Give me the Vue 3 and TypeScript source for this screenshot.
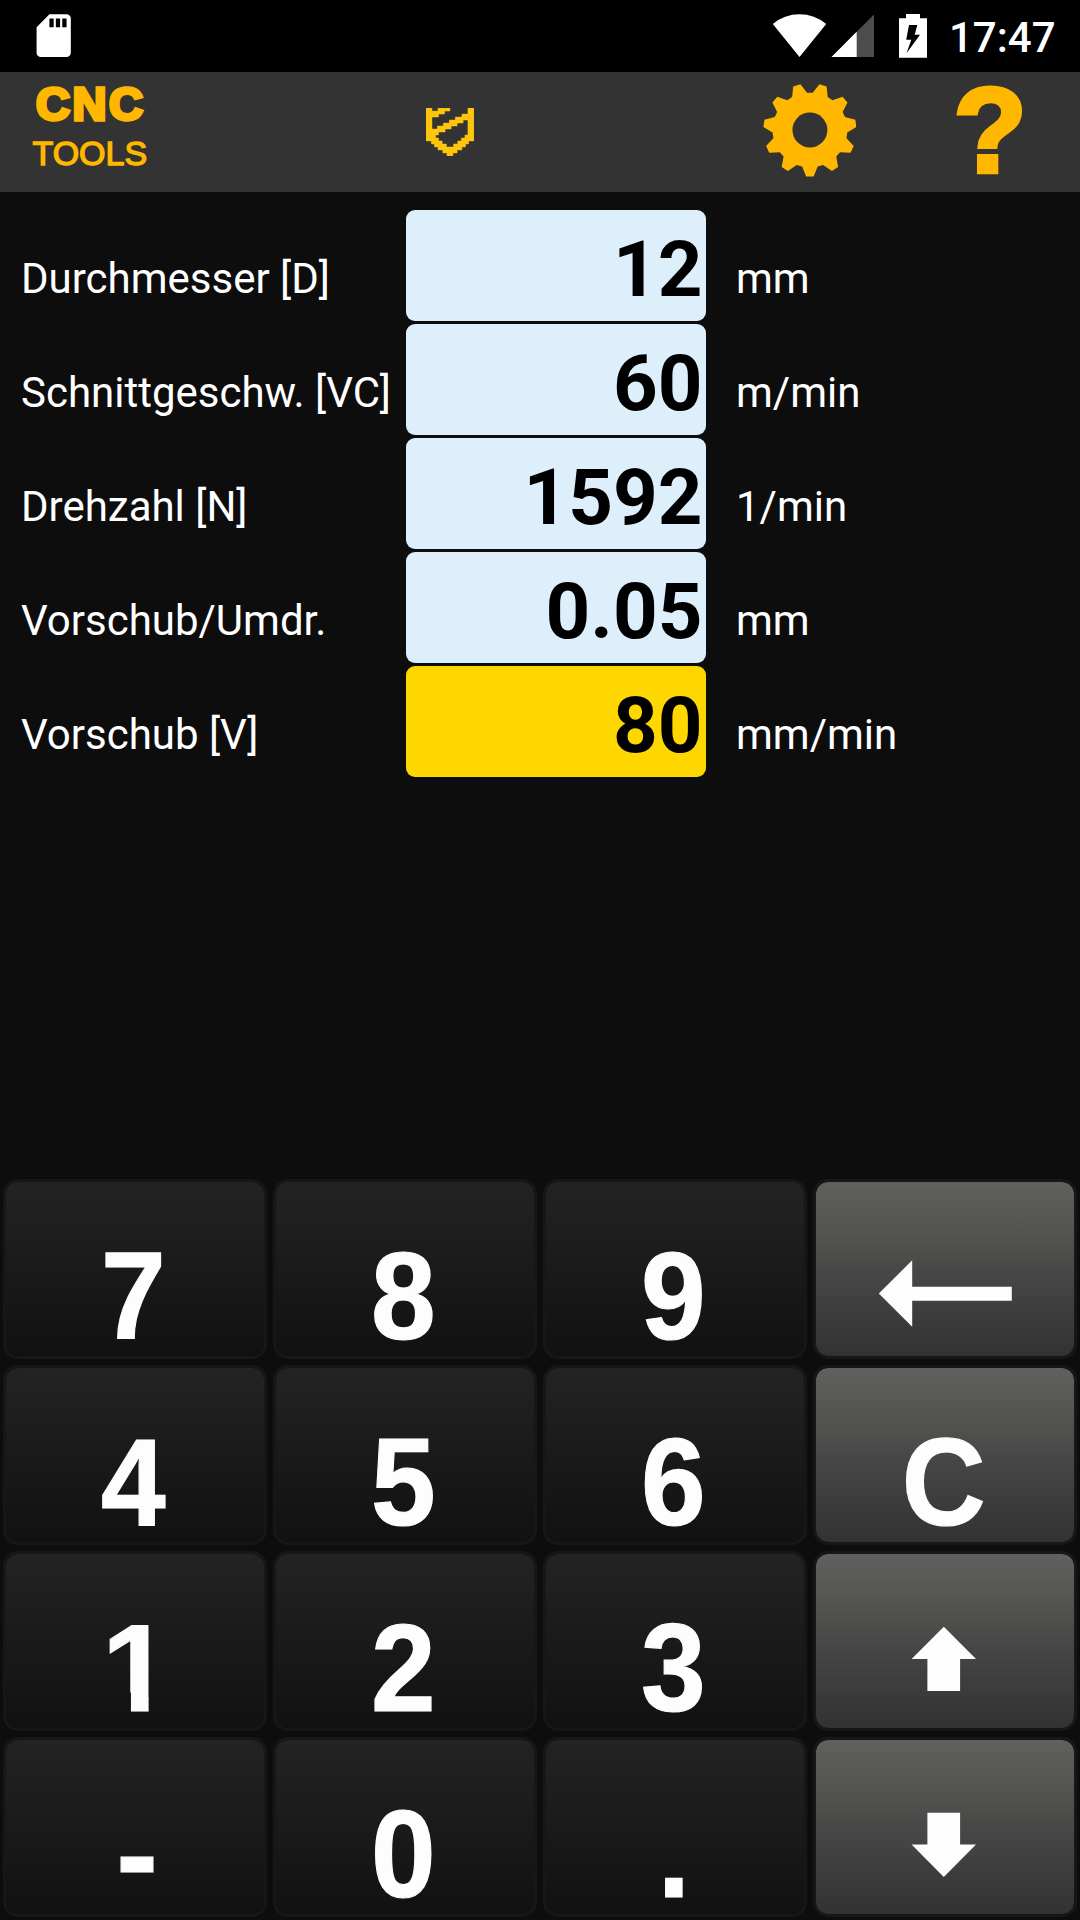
<script setup lang="ts">
interface Field {
  label: string
  value: string
  unit: string
  active?: boolean
}

interface Key {
  id: string
  text?: string
  arrow?: string
  grey?: boolean
}

const fields: Field[] = [
  { label: 'Durchmesser [D]', value: '12', unit: 'mm' },
  { label: 'Schnittgeschw. [VC]', value: '60', unit: 'm/min' },
  { label: 'Drehzahl [N]', value: '1592', unit: '1/min' },
  { label: 'Vorschub/Umdr.', value: '0.05', unit: 'mm' },
  { label: 'Vorschub [V]', value: '80', unit: 'mm/min', active: true },
]

const keys: Key[] = [
  { id: 'seven', text: '7' },
  { id: 'eight', text: '8' },
  { id: 'nine', text: '9' },
  { id: 'back', grey: true, arrow: '65.8,114.5 99.2,81.3 99.2,107.7 198.8,107.7 198.8,121.7 99.2,121.7 99.2,147.7' },
  { id: 'four', text: '4' },
  { id: 'five', text: '5' },
  { id: 'six', text: '6' },
  { id: 'clear', text: 'C', grey: true },
  { id: 'one', text: '1' },
  { id: 'two', text: '2' },
  { id: 'three', text: '3' },
  { id: 'up', grey: true, arrow: '130.8,75.7 163,108 147.1,108 147.1,140 114.4,140 114.4,108 98.6,108' },
  { id: 'minus', text: '-' },
  { id: 'zero', text: '0' },
  { id: 'dot', text: '.' },
  { id: 'down', grey: true, arrow: '114.4,75.8 147.1,75.8 147.1,107.5 163,107.5 130.8,140 98.6,107.5 114.4,107.5' },
]

const TEETH = 11

// Gear outline: every tooth contributes two root points and two tip points.
function gearPoints(): string {
  const points: string[] = []
  const add = (deg: number, r: number) => {
    const a = (deg * Math.PI) / 180
    points.push(`${(Math.sin(a) * r).toFixed(2)},${(Math.cos(a) * r).toFixed(2)}`)
  }
  for (let i = 0; i < TEETH; i++) {
    const c = (i * 360) / TEETH
    add(c - 12, 37.5)
    add(c - 4.6, 46.7)
    add(c + 4.6, 46.7)
    add(c + 12, 37.5)
  }
  return points.join(' ')
}

const gear = gearPoints()

// Shield bitmap on a 16 x 16 grid: [row, left, right].
const shield: number[][] = [
  [0, 0, 2], [0, 4, 8], [0, 14, 16],
  [1, 0, 6.2], [1, 14, 16],
  [2, 0, 4.2], [2, 12, 16],
  [3, 0, 2], [3, 9.8, 16],
  [4, 0, 2], [4, 7.8, 12.4], [4, 14, 16],
  [5, 0, 2], [5, 5.8, 10.4], [5, 14, 16],
  [6, 0, 2], [6, 3.8, 8.4], [6, 14, 16],
  [7, 0, 6.4], [7, 14, 16],
  [8, 0, 4.2], [8, 14, 16],
  [9, 0, 3.2], [9, 13, 16],
  [10, 0, 4.2], [10, 11.8, 16],
  [11, 1.8, 5.4], [11, 10.6, 14.2],
  [12, 2.8, 6.8], [12, 9.2, 13.2],
  [13, 4, 12],
  [14, 5.6, 10.4],
  [15, 7, 9],
]
</script>

<template>
  <div class="screen">
    <div class="status">
      <svg class="sd" viewBox="0 0 24 24">
        <path
          fill="#fff"
          d="M18 2h-8L4.02 8 4 20c0 1.1.9 2 2 2h12c1.1 0 2-.9 2-2V4c0-1.1-.9-2-2-2zm-6 6h-2V4h2v4zm3 0h-2V4h2v4zm3 0h-2V4h2v4z"
        />
      </svg>
      <svg class="indicators" viewBox="770 0 160 72">
        <path fill="#fff" d="M799.5 57 772.8 24Q784.5 14.3 799.5 14.3T826.2 24Z" />
        <path fill="#4d4d4d" d="M874 14.5V57H831.5Z" />
        <path fill="#fff" d="M856.7 31.7V57H831.5Z" />
        <path fill="#fff" d="M906 18.3V14H920V18.3H927V57.8H899V18.3Z" />
        <path fill="#000" d="M909 25H917.3L914.7 34.8H920L906.5 53.3L911.3 39.8H906.2Z" />
      </svg>
      <span class="clock">17:47</span>
    </div>

    <header class="bar">
      <div class="logo">
        <span class="cnc">CNC</span>
        <span class="tools">TOOLS</span>
      </div>
      <svg class="shield" viewBox="0 0 16 16">
        <rect
          v-for="(run, i) in shield"
          :key="i"
          :x="run[1]"
          :y="run[0]"
          :width="run[2] - run[1]"
          height="1"
          fill="#ffc60d"
          stroke="#ffc60d"
          stroke-width="0.15"
          stroke-linejoin="round"
        />
      </svg>
      <svg class="gear" viewBox="-47 -47 94 94">
        <polygon :points="gear" fill="#ffb700" />
        <circle r="17.5" fill="#333" />
      </svg>
      <span class="help">?</span>
    </header>

    <main class="fields">
      <div v-for="f in fields" :key="f.label" class="row">
        <span class="label">{{ f.label }}</span>
        <div class="value" :class="{ active: f.active }">{{ f.value }}</div>
        <span class="unit">{{ f.unit }}</span>
      </div>
    </main>

    <div class="keypad">
      <div v-for="k in keys" :key="k.id" class="key" :class="{ grey: k.grey, arrowed: k.arrow }">
        <svg v-if="k.arrow" viewBox="3 3 258 174">
          <polygon :points="k.arrow" fill="#fdfdfd" />
        </svg>
        <span v-else class="glyph" :class="k.id">{{ k.text }}</span>
      </div>
    </div>
  </div>
</template>

<style>
body {
  background: #0d0d0d;
}
</style>

<style scoped>
.screen {
  width: 1080px;
  height: 1920px;
  display: flex;
  flex-direction: column;
  background: #0d0d0d;
  overflow: hidden;
  font-family: Roboto, "Liberation Sans", sans-serif;
}

.status {
  flex: none;
  height: 72px;
  display: flex;
  background: #000;
}

.sd {
  width: 51.4px;
  height: 51.4px;
  margin: 10.3px 0 0 28.3px;
}

.indicators {
  width: 160px;
  height: 72px;
  margin-left: 690.3px;
}

.clock {
  margin-left: 19px;
  color: #fff;
  font-size: 42px;
  font-weight: 500;
  line-height: 75px;
}

.bar {
  flex: none;
  height: 120px;
  display: flex;
  background: #333;
}

.logo {
  width: 180px;
  display: flex;
  flex-direction: column;
  align-items: center;
  font-family: "Liberation Sans", Arial, sans-serif;
  color: #ffb700;
}

.cnc {
  margin-top: 6px;
  padding-left: 2px;
  font-size: 47px;
  font-weight: 700;
  line-height: 52px;
  letter-spacing: 2.6px;
  -webkit-text-stroke: 3.6px #ffb700;
}

.tools {
  font-size: 34px;
  line-height: 47px;
  -webkit-text-stroke: 1.4px #ffb700;
}

.shield {
  width: 48px;
  height: 48px;
  margin: 36px 0 0 246px;
}

.gear {
  width: 94px;
  height: 94px;
  margin: 11px 0 0 289px;
}

.help {
  width: 180px;
  margin-left: 44px;
  text-align: center;
  font-family: "Liberation Sans", Arial, sans-serif;
  font-size: 120px;
  font-weight: 700;
  line-height: 116px;
  color: #ffb700;
  -webkit-text-stroke: 4.4px #ffb700;
}

.fields {
  flex: 1;
  padding-top: 18px;
  display: flex;
  flex-direction: column;
  gap: 3px;
}

.row {
  height: 111px;
  display: flex;
}

.label {
  width: 385px;
  padding-left: 21px;
  color: #fff;
  font-size: 42px;
  line-height: 137px;
  white-space: nowrap;
}

.value {
  width: 300px;
  box-sizing: border-box;
  padding-right: 3.5px;
  border-radius: 9px;
  background: #dceffb;
  color: #000;
  font-size: 78px;
  font-weight: 700;
  line-height: 119px;
  text-align: right;
}

.value.active {
  background: #ffd700;
}

.unit {
  padding-left: 30px;
  color: #fff;
  font-size: 42px;
  line-height: 137px;
}

.keypad {
  flex: none;
  padding: 3px;
  display: grid;
  grid-template-columns: repeat(4, 264px);
  grid-auto-rows: 180px;
  gap: 6px;
}

.key {
  box-sizing: border-box;
  display: flex;
  align-items: center;
  justify-content: center;
  padding-top: 53px;
  border: 3px solid #171717;
  border-radius: 15px;
  background: linear-gradient(#232323, #111) padding-box;
  color: #fdfdfd;
  font-family: "Liberation Sans", Arial, sans-serif;
  font-size: 125px;
  font-weight: 700;
  line-height: 1;
}

.key.grey {
  background: linear-gradient(#60605e, #50504d 36%, #484848 50%, #323232) padding-box;
}

.key.arrowed {
  padding-top: 0;
}

.key svg {
  width: 258px;
  height: 174px;
}

.glyph {
  transform: translateX(-1.5px) scaleX(0.93);
  -webkit-text-stroke: 1.2px #fdfdfd;
}

/* Footless numeral one: only the stem is kept below the flag. */
.glyph.one {
  transform: translateX(1.5px);
  clip-path: polygon(-10% -20%, 67.4% -20%, 67.4% 120%, 42% 120%, 42% 70%, -10% 70%);
}

.glyph.minus {
  transform: translateX(2px);
}

.glyph.clear {
  transform: translateX(-1.5px) scaleX(0.93);
}
</style>
